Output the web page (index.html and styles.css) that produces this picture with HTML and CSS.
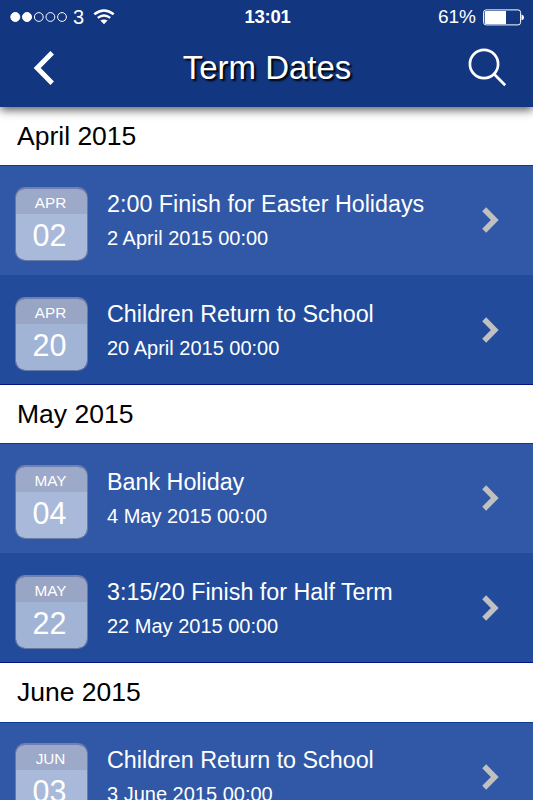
FILE: index.html
```html
<!DOCTYPE html>
<html>
<head>
    <meta charset="utf-8">
    <title>Term Dates</title>
    <link rel="stylesheet" href="styles.css">
</head>
<body>
    <div class="header">
        <div class="status-bar">
            <div class="status-left">
                <svg class="signal" width="58" height="12" viewBox="0 0 58 12">
                    <circle cx="5.3" cy="6" r="4.5" fill="#fff"/>
                    <circle cx="17" cy="6" r="4.5" fill="#fff"/>
                    <circle cx="28.8" cy="6" r="4.4"/>
                    <circle cx="40.4" cy="6" r="4.4"/>
                    <circle cx="52" cy="6" r="4.4"/>
                </svg>
                <span class="carrier">3</span>
                <svg class="wifi" width="22" height="16" viewBox="0 0 22 16">
                    <path d="M1.3 5.3Q11 -2.3 20.7 5.3"/>
                    <path d="M4.8 8.9Q11 4.1 17.2 8.9"/>
                    <path d="M11 15.3L7.4 11.6Q11 9.2 14.6 11.6Z" class="wifi-dot"/>
                </svg>
            </div>
            <div class="clock">13:01</div>
            <div class="status-right">
                <span class="percent">61%</span>
                <svg class="battery" width="42" height="17" viewBox="0 0 42 17">
                    <rect x="0.6" y="0.9" width="37" height="15" rx="2.5"/>
                    <path d="M3 2H23V15H3Q1.8 15 1.8 13.8V3.2Q1.8 2 3 2Z" fill="#fff" stroke="none"/>
                    <path d="M38.5 5.5Q41 6 41 8.4Q41 10.8 38.5 11.3Z" fill="#fff" stroke="none"/>
                </svg>
            </div>
        </div>
        <div class="nav-bar">
            <svg class="back" width="24" height="36" viewBox="0 0 24 36">
                <path d="M19.2 2.8L4.2 18L19.2 33.2"/>
            </svg>
            <h1>Term Dates</h1>
            <svg class="search" width="40" height="40" viewBox="0 0 40 40">
                <circle cx="16" cy="16" r="14.1"/>
                <path d="M26 26L37.2 37.2"/>
            </svg>
        </div>
    </div>

    <div class="list">
        <h2>April 2015</h2>
        <div class="event">
            <div class="date-box"><div class="month">APR</div><div class="day">02</div></div>
            <div class="event-info">
                <div class="event-title">2:00 Finish for Easter Holidays</div>
                <div class="event-date">2 April 2015 00:00</div>
            </div>
            <svg class="arrow" width="18" height="26" viewBox="0 0 18 26"><path d="M2.2 2.2L12.8 13L2.2 23.8"/></svg>
        </div>
        <div class="event dark">
            <div class="date-box"><div class="month">APR</div><div class="day">20</div></div>
            <div class="event-info">
                <div class="event-title">Children Return to School</div>
                <div class="event-date">20 April 2015 00:00</div>
            </div>
            <svg class="arrow" width="18" height="26" viewBox="0 0 18 26"><path d="M2.2 2.2L12.8 13L2.2 23.8"/></svg>
        </div>

        <h2>May 2015</h2>
        <div class="event">
            <div class="date-box"><div class="month">MAY</div><div class="day">04</div></div>
            <div class="event-info">
                <div class="event-title">Bank Holiday</div>
                <div class="event-date">4 May 2015 00:00</div>
            </div>
            <svg class="arrow" width="18" height="26" viewBox="0 0 18 26"><path d="M2.2 2.2L12.8 13L2.2 23.8"/></svg>
        </div>
        <div class="event dark">
            <div class="date-box"><div class="month">MAY</div><div class="day">22</div></div>
            <div class="event-info">
                <div class="event-title">3:15/20 Finish for Half Term</div>
                <div class="event-date">22 May 2015 00:00</div>
            </div>
            <svg class="arrow" width="18" height="26" viewBox="0 0 18 26"><path d="M2.2 2.2L12.8 13L2.2 23.8"/></svg>
        </div>

        <h2>June 2015</h2>
        <div class="event">
            <div class="date-box"><div class="month">JUN</div><div class="day">03</div></div>
            <div class="event-info">
                <div class="event-title">Children Return to School</div>
                <div class="event-date">3 June 2015 00:00</div>
            </div>
            <svg class="arrow" width="18" height="26" viewBox="0 0 18 26"><path d="M2.2 2.2L12.8 13L2.2 23.8"/></svg>
        </div>
    </div>
</body>
</html>
```

FILE: styles.css
```css
* {
    box-sizing: border-box;
}
body {
    margin: 0;
    height: 800px;
    overflow: hidden;
    display: flex;
    flex-direction: column;
    font-family: "Liberation Sans", Arial, sans-serif;
    background-color: #ffffff;
}
svg {
    display: block;
    flex-shrink: 0;
    fill: none;
    stroke: #ffffff;
}

/* header */
.header {
    position: relative;
    z-index: 1;
    flex-shrink: 0;
    height: 106.8px;
    background-color: #12367f;
    color: #ffffff;
    box-shadow: 0 3px 9px rgba(0, 0, 0, 0.65);
}
.status-bar {
    display: grid;
    grid-template-columns: 1fr auto 1fr;
    align-items: center;
    height: 34px;
    padding: 0 8px 0 10px;
    font-size: 20px;
    line-height: 34px;
}
.status-left,
.status-right {
    display: flex;
    align-items: center;
}
.status-right {
    justify-content: flex-end;
}
.carrier {
    margin-left: 5px;
}
.wifi {
    margin-left: 9px;
    stroke-width: 2.4;
}
.wifi-dot {
    fill: #ffffff;
    stroke: none;
}
.clock {
    font-size: 18.5px;
    font-weight: bold;
    letter-spacing: -0.3px;
}
.percent {
    font-size: 19px;
}
.battery {
    margin-left: 7px;
}
.nav-bar {
    display: flex;
    align-items: center;
    justify-content: space-between;
    height: 68px;
    padding: 0 25px 0 33px;
}
.back {
    stroke-width: 5;
}
h1 {
    margin: 0 0 0 9px;
    font-size: 33px;
    font-weight: normal;
    line-height: 40px;
    text-shadow: 2px 2px 2px #000000;
}
.search {
    stroke-width: 2.7;
}

/* list */
h2 {
    height: 58.4px;
    margin: 0;
    padding-left: 17px;
    font-size: 26.5px;
    font-weight: normal;
    line-height: 58px;
    color: #000000;
}
.event {
    display: flex;
    height: 109.9px;
    padding: 20.6px 33px 0 15px;
    background-color: #3058a6;
    color: #ffffff;
    border-top: 1px solid #0e3b92;
}
.event.dark {
    background-color: #224c9b;
    border-top: none;
    border-bottom: 1px solid #00158a;
    padding-top: 21.6px;
}
.date-box {
    width: 73px;
    height: 74px;
    border: 1px solid rgba(125, 135, 165, 0.75);
    border-top: 2px solid #7180ae;
    border-radius: 10px;
    background-color: rgba(255, 255, 255, 0.58);
    background-clip: padding-box;
    overflow: hidden;
    text-align: center;
}
.month {
    height: 25px;
    padding-right: 2px;
    background-color: rgba(128, 132, 160, 0.3);
    font-size: 15.3px;
    line-height: 28px;
}
.day {
    padding-right: 4px;
    font-size: 30.5px;
    line-height: 42px;
}
.event-info {
    flex: 1;
    padding-left: 19px;
    white-space: nowrap;
}
.event-title {
    font-size: 23.3px;
    line-height: 34px;
}
.event-date {
    font-size: 20px;
    line-height: 34px;
}
.arrow {
    margin-top: 20.4px;
    stroke: #c0c0c0;
    stroke-width: 5.5;
}
```
